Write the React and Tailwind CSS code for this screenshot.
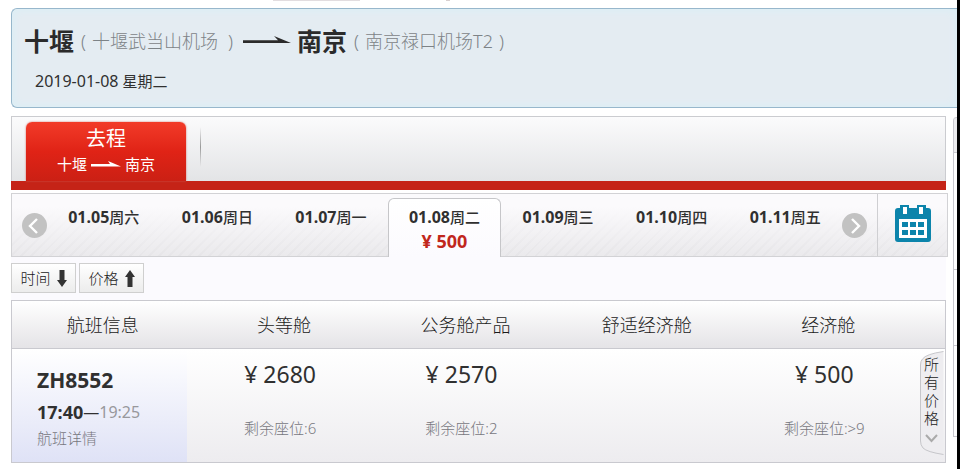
import React from "react";

const days = [
  { date: "01.05", week: "周六" },
  { date: "01.06", week: "周日" },
  { date: "01.07", week: "周一" },
  { date: "01.08", week: "周二", price: 500 },
  { date: "01.09", week: "周三" },
  { date: "01.10", week: "周四" },
  { date: "01.11", week: "周五" },
];

const cabins = [
  { name: "头等舱", price: 2680, seats: "6" },
  { name: "公务舱产品", price: 2570, seats: "2" },
  { name: "舒适经济舱" },
  { name: "经济舱", price: 500, seats: ">9" },
];

const RouteArrow = ({ className }) => (
  <svg viewBox="0 0 48 10" className={className} fill="currentColor" aria-hidden="true">
    <path d="M0 4.200h35L31 0l17 7H0z" />
  </svg>
);

// Thicker variant, stays readable on the red tab
const TabArrow = () => (
  <svg viewBox="0 0 30 7" className="h-[7px] w-[30px]" fill="currentColor" aria-hidden="true">
    <path d="M0 3h19L17 0l13 5.500H0z" />
  </svg>
);

const ArrowButton = ({ label, path }) => (
  <button
    type="button"
    aria-label={label}
    className="flex h-[25px] w-[25px] items-center justify-center rounded-full bg-[#c2c2c2] text-white"
  >
    <svg viewBox="0 0 25 25" className="h-[25px] w-[25px]" fill="none" stroke="currentColor" strokeWidth="2.4">
      <path d={path} />
    </svg>
  </button>
);

const SortButton = ({ children, path }) => (
  <button
    type="button"
    className="flex h-[30px] w-[65px] items-center justify-center gap-[6px] border border-[#cfcfcf] bg-linear-to-b from-white to-[#ececec] text-[15px] leading-5 font-light text-[#1a1a1a]"
  >
    {children}
    <svg viewBox="0 0 10 17" className="h-[17px] w-[10px]" fill="#333" aria-hidden="true">
      <path d={path} />
    </svg>
  </button>
);

const CalendarIcon = () => (
  <svg viewBox="0 0 36 37" className="h-[37px] w-9" aria-hidden="true">
    <path
      fill="#0c84ab"
      d="M5 0h9v3h8V0h9v3h2a3 3 0 0 1 3 3v28a3 3 0 0 1-3 3H3a3 3 0 0 1-3-3V6a3 3 0 0 1 3-3h2z"
    />
    <path fill="#fff" d="M8 2h4v7H8zM24 2h4v7h-4zM4 14h28v19H4z" />
    <path
      fill="#0c84ab"
      d="M7 17h6v5H7zM15 17h6v5h-6zM23 17h6v5h-6zM7 25h6v5H7zM15 25h6v5h-6zM23 25h6v5h-6z"
    />
  </svg>
);

const Airport = ({ children }) => (
  <span className="ml-[7px] flex gap-[6px] text-lg leading-9 font-light text-[#7d8387]">
    <span>(</span>
    {children}
    <span>)</span>
  </span>
);

const Banner = () => (
  <header className="ml-[11px] h-[100px] rounded-l-md border border-r-0 border-[#97b7cc] bg-[#e4ecf2] pl-3 shadow-[inset_0_0_6px_3px_#ddeef5]">
    <h1 className="flex items-center pt-[14px] text-[25px] leading-9 text-[#2b2b2b]">
      <span className="font-bold">十堰</span>
      <Airport>
        <span className="pr-1">十堰武当山机场</span>
      </Airport>
      <RouteArrow className="mr-[6px] ml-[10px] h-[10px] w-12" />
      <span className="font-bold">南京</span>
      <Airport>南京禄口机场T2</Airport>
    </h1>
    <p className="pt-3 pl-[11px] text-[15px] leading-5">
      <span className="text-base leading-5">2019-01-08</span> 星期二
    </p>
  </header>
);

const TripTabs = () => (
  <nav>
    <div className="flex border border-b-0 border-[#cbccd0] bg-linear-to-b from-[#fbfbfc] to-[#e3e4e6] pt-[5px] pl-[14px]">
      <button
        type="button"
        className="flex h-[59px] w-40 flex-col items-center rounded-t-md bg-linear-to-b from-[#f23a28] via-[#e02316] to-[#cb2014] text-white shadow-[0_0_2px_#d0655c]"
      >
        <span className="pt-1 text-xl leading-[26px]">去程</span>
        <span className="flex items-center gap-1 text-[15px] leading-6">
          十堰
          <TabArrow />
          南京
        </span>
      </button>
      <span className="mt-[5px] ml-[14px] h-10 w-px bg-linear-to-b from-transparent via-[#999] to-transparent" />
    </div>
    <div className="h-[9px] bg-[#c52317]" />
  </nav>
);

const DateBar = () => (
  <div className="-mr-0.5 mt-[3px] flex h-[64px] border border-[#d2d2d5] bg-[linear-gradient(to_bottom,#fbfafc_20%,#fbfafc40),repeating-linear-gradient(135deg,#dfdee1_0_2px,#e5e4e7_2px_7px)]">
    <div className="flex w-[35px] items-center justify-end">
      <ArrowButton label="前一周" path="M15 6l-7 7 7 7" />
    </div>
    <div className="-mb-px grid flex-1 grid-cols-7 pt-1">
      {days.map((day) => (
        <button
          key={day.date}
          type="button"
          className={
            day.price
              ? "flex flex-col items-center rounded-t-md border border-b-0 border-[#c6c6c9] bg-linear-to-b from-white to-[#fbfafe] pt-2 font-bold"
              : "flex flex-col items-center pt-[9px] font-bold"
          }
        >
          <span className="text-[15px] leading-5">
            <span className="text-base leading-5">{day.date}</span>
            <span className="font-medium">{day.week}</span>
          </span>
          {day.price && <span className="pt-0.5 text-lg leading-6 text-[#c1271c]">¥ {day.price}</span>}
        </button>
      ))}
    </div>
    <div className="flex w-[35px] items-center justify-start">
      <ArrowButton label="后一周" path="M10 6l7 7-7 7" />
    </div>
    <button type="button" aria-label="日历" className="flex w-[70px] items-center justify-center border-l border-[#cfcfd2] pb-1">
      <CalendarIcon />
    </button>
  </div>
);

const FlightTable = () => (
  <div className="border border-[#c9c9cf]">
    <table className="w-full table-fixed border-separate border-spacing-0">
      <colgroup>
        <col />
        <col />
        <col />
        <col />
        <col />
        <col className="w-[26px]" />
      </colgroup>
      <thead>
        <tr className="h-12 bg-linear-to-b from-white to-[#e4e3e6] text-lg leading-6 text-[#1a1a1a]">
          <th className="border-b border-[#c9c9cf] font-light">航班信息</th>
          {cabins.map((cabin) => (
            <th key={cabin.name} className="border-b border-[#c9c9cf] font-light">{cabin.name}</th>
          ))}
          <td className="border-b border-[#c9c9cf]" />
        </tr>
      </thead>
      <tbody>
        <tr className="h-[113px] bg-linear-to-b from-white to-[#edecef] align-top">
          <td className="pr-[6px]">
            <div className="h-[113px] bg-linear-to-b from-white to-[#dfe2f6] pt-[19px] pl-[25px]">
              <div className="text-[21px] leading-6 font-bold">ZH8552</div>
              <div className="flex items-center pt-2 text-base leading-6">
                <span className="text-lg leading-6 font-bold">17:40</span>—
                <span className="text-[#98989c]">19:25</span>
              </div>
              <a href="#detail" className="block pt-0.5 text-[15px] leading-6 font-light text-[#77777e]">航班详情</a>
            </div>
          </td>
          {cabins.map((cabin) => (
            <td key={cabin.name} className="pr-2 text-center">
              {cabin.price && (
                <>
                  <div className="pt-[9px] text-[23px] leading-8">¥ {cabin.price}</div>
                  <div className="pt-7 text-[15px] leading-5 font-light text-[#77777e]">剩余座位:{cabin.seats}</div>
                </>
              )}
            </td>
          ))}
          <td className="pt-0.5">
            <button type="button" className="relative block h-[104px] w-[25px]">
              <svg viewBox="0 0 25 104" className="absolute inset-0 h-full w-full" aria-hidden="true">
                <path d="M24.500 .5Q7 3 3.500 8Q1.500 10 1.500 14V90Q1.500 94 4 97Q8 101 24.500 103.500" fill="#eeedf0" stroke="#c6c6ca" />
                <path d="M7 84l5.500 6 5.500-6" fill="none" stroke="#aaa" strokeWidth="2" />
              </svg>
              <span className="relative block px-[5px] pb-6 text-[15px] leading-[18px] font-light text-[#1a1a1a]">所有价格</span>
            </button>
          </td>
        </tr>
      </tbody>
    </table>
  </div>
);

const SidePanel = () => (
  <aside className="mt-px flex h-[320px] w-1 flex-col rounded-tl-md border-l border-[#c9c9cf]">
    <div className="h-9 rounded-tl-md border-t border-b border-[#c9c9cf] bg-[#ececee]" />
    <div className="h-[117px] border-b border-[#c9c9cf]" />
    <div className="h-[76px] border-b border-[#c9c9cf]" />
    <div className="flex-1 border-b border-[#c9c9cf]" />
  </aside>
);

const App = () => (
  <div className="min-h-screen border-r-[3px] border-black bg-white font-['Noto_Sans','Noto_Sans_CJK_SC',sans-serif] text-[#303030]">
    <div className="flex h-2 items-start">
      <span className="ml-[273px] h-px w-[87px] bg-[#e2dde0]" />
      <span className="ml-[86px] h-px w-1 bg-[#d8d0d0]" />
    </div>
    <Banner />
    <div className="mt-2 ml-[11px] flex gap-[7px]">
      <main className="min-w-0 flex-1">
        <TripTabs />
        <DateBar />
        <div className="flex gap-[3px] bg-[#fbfafe] pt-[6px] pb-[7px]">
          <SortButton path="M2.500 0h5v10H10l-5 7-5-7h2.500z">时间</SortButton>
          <SortButton path="M2.500 17h5V7H10L5 0 0 7h2.500z">价格</SortButton>
        </div>
        <FlightTable />
      </main>
      <SidePanel />
    </div>
  </div>
);

export default App;
